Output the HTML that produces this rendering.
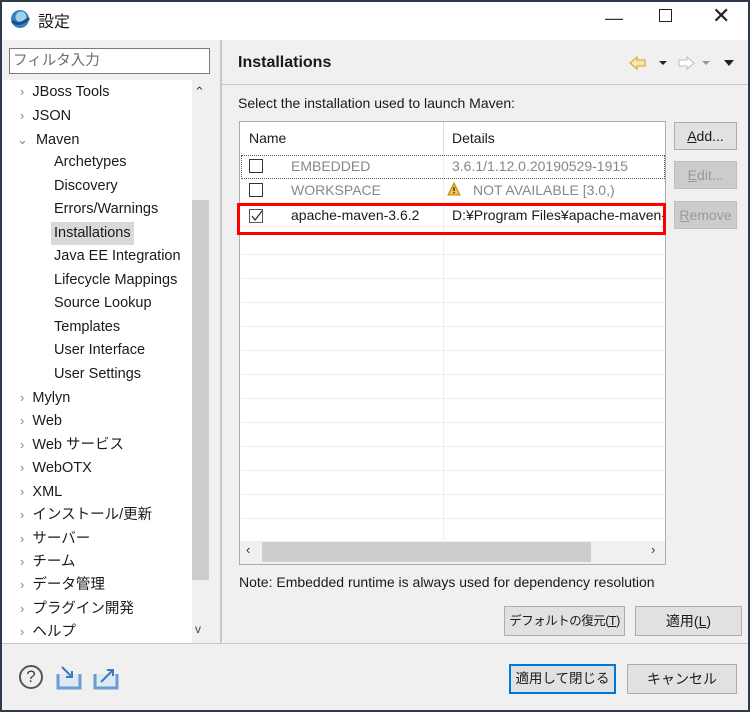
<!DOCTYPE html>
<html><head><meta charset="utf-8"><style>
*{box-sizing:border-box;margin:0;padding:0}
body{width:750px;height:712px;overflow:hidden;font-family:"Liberation Sans","Noto Sans CJK JP",sans-serif;font-size:14px;color:#1a1a1a;background:#2c3a4a}
#win{position:absolute;left:2px;top:2px;width:746px;height:708px;background:#f0f0f0;overflow:hidden}
.a{position:absolute;white-space:nowrap}
#title{left:0;top:0;width:746px;height:38px;background:#fff}
.tree div{position:absolute;height:23px;line-height:23px;font-size:14.5px;white-space:nowrap}
.chev{color:#888;font-size:13px}
.btn{position:absolute;background:#e1e1e1;border:1px solid #adadad;text-align:center;font-size:14px;white-space:nowrap}
.row{position:absolute;left:239px;width:424px;height:24px;border-bottom:1px solid #eee}
.cb{position:absolute;width:14px;height:14px;border:1px solid #333;background:#fff}
</style></head><body><div id="win">
<div class="a" id="title"></div>
<svg class="a" style="left:7px;top:6px" width="22" height="22" viewBox="0 0 22 22"><circle cx="11" cy="11" r="9" fill="#3c7fc0"/><circle cx="12" cy="9" r="5.5" fill="#9fd0e8"/><path d="M3 13q8 6 17-3" stroke="#1a4f8a" stroke-width="3" fill="none"/></svg>
<div class="a" style="left:36px;top:6px;font-size:16px">設定</div>
<div class="a" style="left:603px;top:6px;font-size:18px;color:#333">—</div>
<div class="a" style="left:657px;top:7px;width:13px;height:13px;border:1.5px solid #222"></div>
<div class="a" style="left:710px;top:1px;font-size:22px;color:#222">✕</div>
<div class="a" style="left:7px;top:46px;width:201px;height:26px;border:1px solid #7a7a7a;background:#fff;color:#6e6e6e;font-size:14.5px;line-height:24px;padding-left:3px">フィルタ入力</div>
<div class="a" style="left:0;top:78px;width:190px;height:563px;background:#fff"></div>
<div class="a" style="left:190px;top:78px;width:18px;height:563px;background:#f0f0f0"></div>
<div class="a" style="left:190px;top:198px;width:17px;height:380px;background:#cdcdcd"></div>
<div class="a" style="left:192px;top:82px;font-size:13px;color:#444">⌃</div>
<div class="a" style="left:193px;top:620px;font-size:12px;color:#444">v</div>
<div class="tree">
<div style="left:18px;top:78px"><span class="chev">›</span>&nbsp;&nbsp;JBoss Tools</div>
<div style="left:18px;top:102px"><span class="chev">›</span>&nbsp;&nbsp;JSON</div>
<div style="left:15px;top:126px"><span class="chev">⌄</span>&nbsp;&nbsp;Maven</div>
<div style="left:52px;top:149px">Archetypes</div>
<div style="left:52px;top:173px">Discovery</div>
<div style="left:52px;top:196px">Errors/Warnings</div>
<div style="left:49px;top:220px;background:#d9d9d9;padding:0 3px">Installations</div>
<div style="left:52px;top:243px">Java EE Integration</div>
<div style="left:52px;top:267px">Lifecycle Mappings</div>
<div style="left:52px;top:290px">Source Lookup</div>
<div style="left:52px;top:314px">Templates</div>
<div style="left:52px;top:337px">User Interface</div>
<div style="left:52px;top:361px">User Settings</div>
<div style="left:18px;top:384px"><span class="chev">›</span>&nbsp;&nbsp;Mylyn</div>
<div style="left:18px;top:407px"><span class="chev">›</span>&nbsp;&nbsp;Web</div>
<div style="left:18px;top:431px"><span class="chev">›</span>&nbsp;&nbsp;Web サービス</div>
<div style="left:18px;top:454px"><span class="chev">›</span>&nbsp;&nbsp;WebOTX</div>
<div style="left:18px;top:478px"><span class="chev">›</span>&nbsp;&nbsp;XML</div>
<div style="left:18px;top:501px"><span class="chev">›</span>&nbsp;&nbsp;インストール/更新</div>
<div style="left:18px;top:525px"><span class="chev">›</span>&nbsp;&nbsp;サーバー</div>
<div style="left:18px;top:548px"><span class="chev">›</span>&nbsp;&nbsp;チーム</div>
<div style="left:18px;top:571px"><span class="chev">›</span>&nbsp;&nbsp;データ管理</div>
<div style="left:18px;top:595px"><span class="chev">›</span>&nbsp;&nbsp;プラグイン開発</div>
<div style="left:18px;top:618px"><span class="chev">›</span>&nbsp;&nbsp;ヘルプ</div>
</div>
<div class="a" style="left:218px;top:38px;width:2px;height:603px;background:#c8c8c8"></div>
<div class="a" style="left:220px;top:82px;width:526px;height:1px;background:#c8c8c8"></div>
<div class="a" style="left:236px;top:52px;font-size:16px;font-weight:bold">Installations</div>
<svg class="a" style="left:626px;top:53px" width="118" height="16"><path d="M2 8l7-6v3h8v6h-8v3z" fill="#fbe6a8" stroke="#d4a020"/><path d="M31 6l4 4 4-4z" fill="#222"/><path d="M66 8l-7-6v3h-8v6h8v3z" fill="#fff" stroke="#bbb"/><path d="M74 6l4 4 4-4z" fill="#999"/><path d="M96 5l5 6 5-6z" fill="#222"/></svg>
<div class="a" style="left:236px;top:93px;font-size:14px">Select the installation used to launch Maven:</div>
<div class="a" style="left:237px;top:119px;width:427px;height:444px;border:1px solid #adadad;background:#fff"></div>
<div class="a" style="left:441px;top:120px;width:1px;height:420px;background:#eee"></div>
<div class="a" style="left:441px;top:120px;width:1px;height:33px;background:#ddd"></div>
<div class="a" style="left:247px;top:128px">Name</div>
<div class="a" style="left:450px;top:128px">Details</div>
<div class="row" style="top:153px;border:1px dotted #555"></div>
<div class="row" style="top:177px"></div><div class="row" style="top:201px"></div>
<div class="row" style="top:229px"></div><div class="row" style="top:253px"></div><div class="row" style="top:277px"></div><div class="row" style="top:301px"></div><div class="row" style="top:325px"></div><div class="row" style="top:349px"></div><div class="row" style="top:373px"></div><div class="row" style="top:397px"></div><div class="row" style="top:421px"></div><div class="row" style="top:445px"></div><div class="row" style="top:469px"></div><div class="row" style="top:493px"></div>
<div class="cb" style="left:247px;top:157px"></div>
<div class="cb" style="left:247px;top:181px"></div>
<div class="cb" style="left:247px;top:207px;border-color:#555"></div>
<svg class="a" style="left:248px;top:207px" width="14" height="14"><path d="M2 7l3 4 7-9" stroke="#333" stroke-width="1.3" fill="none"/></svg>
<div class="a" style="left:289px;top:156px;color:#888">EMBEDDED</div>
<div class="a" style="left:450px;top:156px;color:#888">3.6.1/1.12.0.20190529-1915</div>
<div class="a" style="left:289px;top:180px;color:#888">WORKSPACE</div>
<svg class="a" style="left:445px;top:180px" width="14" height="14"><path d="M7 1l6 12H1z" fill="#f5c542" stroke="#b8860b"/><rect x="6.3" y="5" width="1.4" height="4" fill="#333"/><rect x="6.3" y="10" width="1.4" height="1.4" fill="#333"/></svg>
<div class="a" style="left:471px;top:180px;color:#888">NOT AVAILABLE [3.0,)</div>
<div class="a" style="left:289px;top:205px">apache-maven-3.6.2</div>
<div class="a" style="left:450px;top:205px;width:212px;overflow:hidden">D:¥Program Files¥apache-maven-3</div>
<div class="a" style="left:235px;top:201px;width:429px;height:32px;border:3px solid #f00"></div>
<div class="a" style="left:238px;top:539px;width:425px;height:23px;background:#f0f0f0"></div>
<div class="a" style="left:260px;top:540px;width:329px;height:20px;background:#cdcdcd"></div>
<div class="a" style="left:244px;top:540px;font-size:13px;color:#333">‹</div>
<div class="a" style="left:649px;top:540px;font-size:13px;color:#333">›</div>
<div class="btn" style="left:672px;top:120px;width:63px;height:28px;line-height:26px"><u>A</u>dd...</div>
<div class="btn" style="left:672px;top:159px;width:63px;height:28px;line-height:26px;color:#999;background:#ccc;border-color:#bfbfbf"><u>E</u>dit...</div>
<div class="btn" style="left:672px;top:199px;width:63px;height:28px;line-height:26px;color:#999;background:#ccc;border-color:#bfbfbf"><u>R</u>emove</div>
<div class="a" style="left:237px;top:572px">Note: Embedded runtime is always used for dependency resolution</div>
<div class="btn" style="left:502px;top:604px;width:121px;height:30px;line-height:28px;font-size:12.5px;letter-spacing:-0.5px">デフォルトの復元(<u>T</u>)</div>
<div class="btn" style="left:633px;top:604px;width:107px;height:30px;line-height:28px">適用(<u>L</u>)</div>
<div class="a" style="left:0;top:641px;width:746px;height:1px;background:#c8c8c8"></div>
<div class="a" style="left:17px;top:663px;width:24px;height:24px;border:2px solid #555;border-radius:50%;text-align:center;font-size:17px;line-height:20px;color:#444">?</div>
<svg class="a" style="left:53px;top:662px" width="66" height="26"><path d="M3 10v14h22v-14" stroke="#6b9ccd" stroke-width="3" fill="#dde9f5"/><path d="M7 3l10 10m0-6v6h-6" stroke="#3a7bc0" stroke-width="2" fill="none"/><path d="M40 10v14h22v-14" stroke="#6b9ccd" stroke-width="3" fill="#dde9f5"/><path d="M46 18l12-12m-6 0h6v6" stroke="#3a7bc0" stroke-width="2" fill="none"/></svg>
<div class="btn" style="left:507px;top:662px;width:107px;height:30px;line-height:26px;border:2px solid #0078d7;font-size:13.5px">適用して閉じる</div>
<div class="btn" style="left:625px;top:662px;width:110px;height:30px;line-height:28px">キャンセル</div>
</div></body></html>
